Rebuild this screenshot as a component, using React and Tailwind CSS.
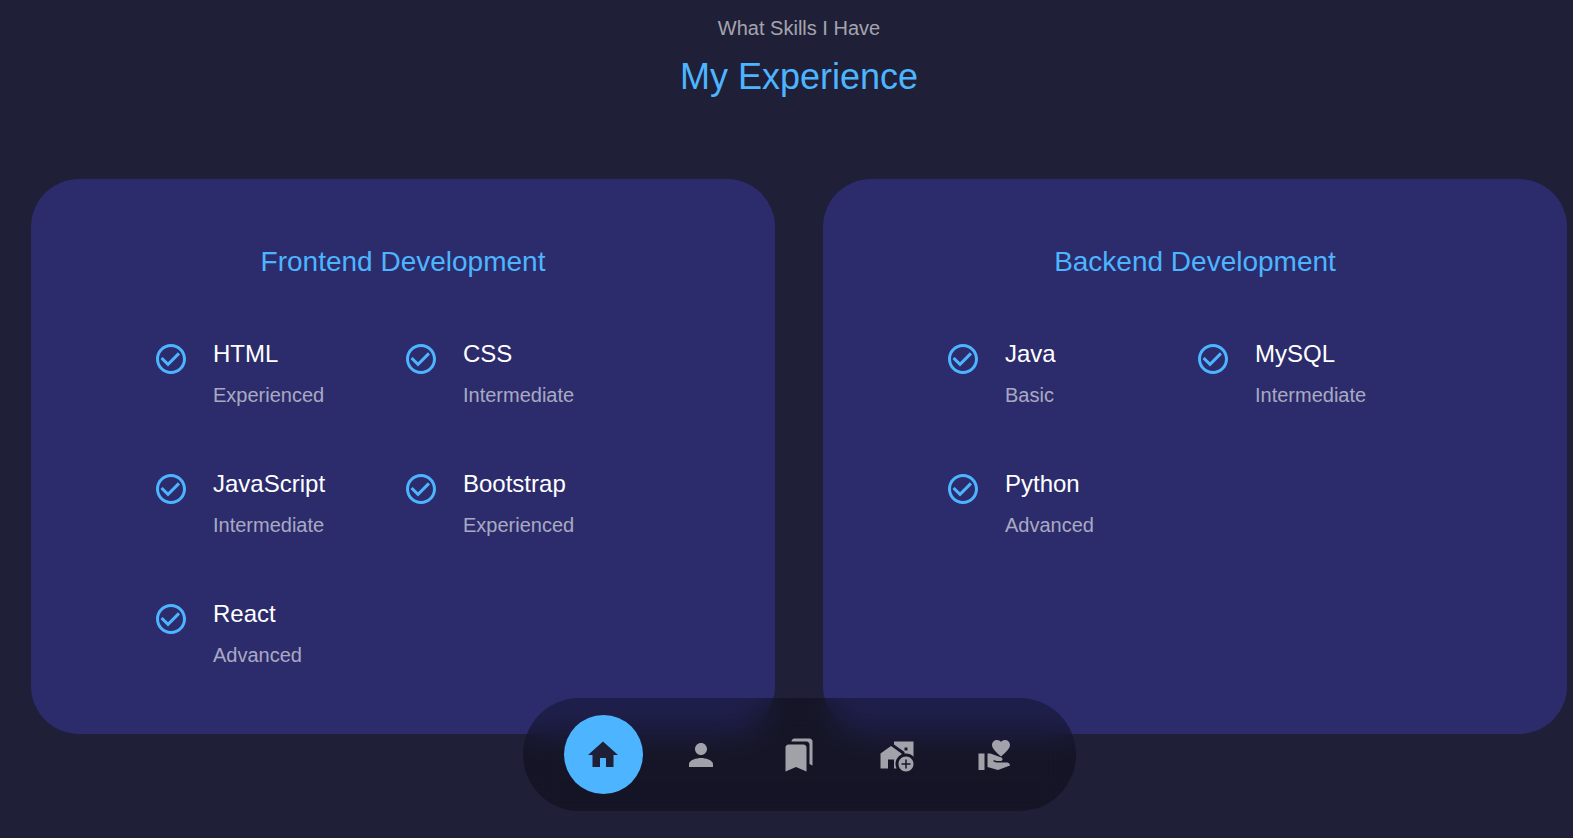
import {
  MdAddHomeWork,
  MdBookmarks,
  MdCheckCircleOutline,
  MdHome,
  MdPerson,
  MdVolunteerActivism,
} from "react-icons/md";

const groups = [
  {
    title: "Frontend Development",
    skills: [
      ["HTML", "Experienced"],
      ["CSS", "Intermediate"],
      ["JavaScript", "Intermediate"],
      ["Bootstrap", "Experienced"],
      ["React", "Advanced"],
    ],
  },
  {
    title: "Backend Development",
    skills: [
      ["Java", "Basic"],
      ["MySQL", "Intermediate"],
      ["Python", "Advanced"],
    ],
  },
];

const links = [
  { label: "Home", href: "#home", Icon: MdHome, active: true },
  { label: "About", href: "#about", Icon: MdPerson },
  { label: "Experience", href: "#experience", Icon: MdBookmarks },
  { label: "Services", href: "#services", Icon: MdAddHomeWork },
  { label: "Contact", href: "#contact", Icon: MdVolunteerActivism },
];

function Skill({ name, level }) {
  return (
    <li className="flex items-start gap-6">
      <MdCheckCircleOutline className="mt-2 size-9 shrink-0 text-[#4db5ff]" aria-hidden="true" />
      <div>
        <h4 className="text-2xl leading-[41px] text-white">{name}</h4>
        <p className="text-xl leading-[43px] text-white/60">{level}</p>
      </div>
    </li>
  );
}

function SkillCard({ title, skills }) {
  return (
    <article className="rounded-[48px] bg-[#2c2c6c] px-[122px] pt-[58px] pb-[57px]">
      <h3 className="mb-[46px] text-center text-[28px] leading-[50px] text-[#4db5ff]">{title}</h3>
      <ul className="grid grid-cols-2 gap-y-[46px]">
        {skills.map(([name, level]) => (
          <Skill key={name} name={name} level={level} />
        ))}
      </ul>
    </article>
  );
}

function NavBar() {
  return (
    <div className="fixed inset-x-0 bottom-[27px] flex justify-center pr-[6px] pl-[31px]">
      <nav
        aria-label="Sections"
        className="flex gap-[19px] rounded-full bg-black/30 px-[41px] py-[17px] backdrop-blur-[15px]"
      >
        {links.map(({ label, href, Icon, active }) => (
          <a
            key={label}
            href={href}
            aria-label={label}
            className={
              active
                ? "flex size-[79px] items-center justify-center rounded-full bg-[#4db5ff] text-[#1f1f38]"
                : "flex size-[79px] items-center justify-center rounded-full text-white/60"
            }
          >
            <Icon className="size-9" aria-hidden="true" />
          </a>
        ))}
      </nav>
    </div>
  );
}

export default function App() {
  return (
    <div className="min-h-screen bg-[#1f1f38] pt-[11px] pr-[6px] pl-[31px] font-['Liberation_Sans',Arial,sans-serif]">
      <section id="experience">
        <header className="mb-[70px] text-center">
          <p className="text-xl leading-[34px] text-white/60">What Skills I Have</p>
          <h2 className="text-4xl leading-[64px] text-[#4db5ff]">My Experience</h2>
        </header>
        <div className="grid grid-cols-2 gap-12">
          {groups.map((group) => (
            <SkillCard key={group.title} title={group.title} skills={group.skills} />
          ))}
        </div>
      </section>
      <NavBar />
    </div>
  );
}
